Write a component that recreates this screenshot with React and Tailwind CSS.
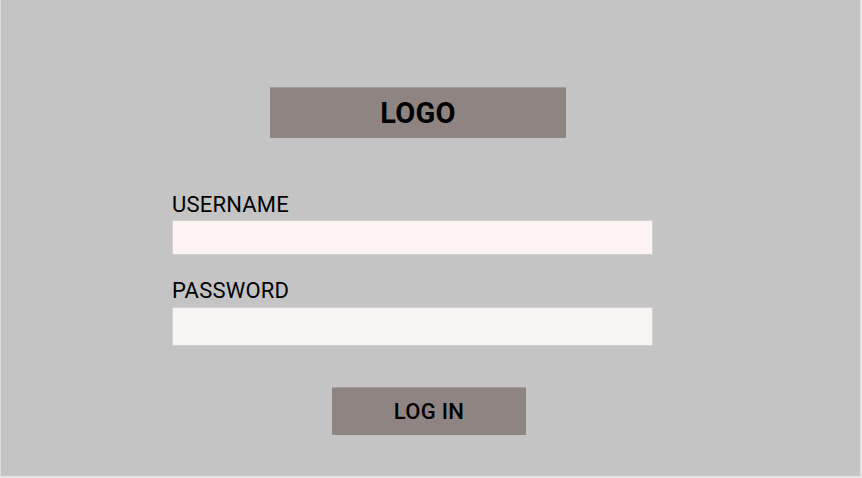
export default function App() {
  return (
    <div className="w-[862px] h-[478px] bg-[#e4e4e4] font-['Roboto','Liberation_Sans',sans-serif] text-black">
      <div className="w-[860px] h-[476px] border-l border-[#dedede] bg-[#c4c4c4] flex flex-col">
        {/* Logo */}
        <div className="mt-[87px] ml-[269px] w-[296px] h-[51px] bg-[#8e8583] border-t border-[#a39b99] flex items-center justify-center">
          <span className="text-[29px] font-bold leading-none tracking-[0.3px]">LOGO</span>
        </div>

        {/* Username */}
        <label className="mt-[55px] ml-[171px] text-[22px] leading-[24px] tracking-[0.2px]">USERNAME</label>
        <input
          type="text"
          className="mt-[3px] ml-[171px] w-[481px] h-[35px] bg-[#fdf3f2] border border-[#d4cfcf] outline-none"
        />

        {/* Password */}
        <label className="mt-[24px] ml-[171px] text-[22px] leading-[24px] tracking-[0.2px]">PASSWORD</label>
        <input
          type="password"
          className="mt-[4px] ml-[171px] w-[481px] h-[39px] bg-[#f9f4f4] border border-[#d4cfcf] outline-none"
        />

        {/* Button */}
        <button className="mt-[41px] ml-[331px] w-[194px] h-[48px] bg-[#8e8583] border-t border-[#a39b99] text-[22px] font-medium leading-none tracking-[0.3px]">
          LOG IN
        </button>
      </div>
    </div>
  );
}
